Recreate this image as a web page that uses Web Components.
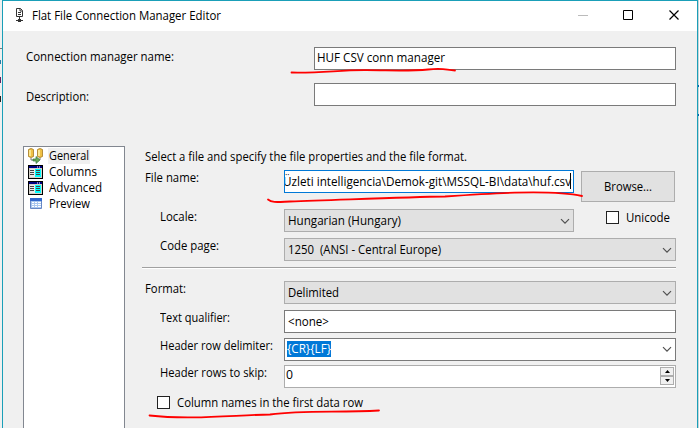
<!DOCTYPE html>
<html lang="en"><head><meta charset="utf-8"><title>Flat File Connection Manager Editor</title>
<style>html,body{margin:0;height:100%;overflow:hidden}body{background:#f0f0f0;color:#000;font:12px/16px "Open Sans","Noto Sans",sans-serif}</style></head>
<body><file-editor></file-editor>
<script>
function define(name, html, init) {
  const t = document.createElement('template');
  t.innerHTML = html;
  customElements.define(name, class extends HTMLElement {
    connectedCallback() {
      if (this.shadowRoot) return;
      this.attachShadow({ mode: 'open' }).append(t.content.cloneNode(true));
      if (init) init(this, this.shadowRoot);
    }
  });
}

/* Text line condensed to the advance width given by "w". */
define('ui-text', `<style>:host{display:inline-block;white-space:pre;height:16px;flex:none}
span{display:inline-block;transform-origin:0 50%}</style><span><slot></slot></span>`, (el, root) => {
  const w = +el.getAttribute('w'), s = root.querySelector('span');
  el.style.width = w + 'px';
  const n = s.getBoundingClientRect().width;
  if (n) s.style.transform = `scaleX(${w / n})`;
});

define('ui-field', `<style>:host{display:flex;box-sizing:border-box;height:23px;border:1px solid #7a7a7a;background:#fff;padding:2px 3px 0;flex:1;min-width:0;overflow:hidden}
:host([grey]){background:#e1e1e1;border-color:#adadad;padding-top:3px}:host([focused]){border-color:#0078d7;padding-top:3px}:host([low]){padding-top:3px}
svg{display:none;margin:5px 0 0 auto;flex:none}:host([combo]) svg{display:block}</style><slot></slot>
<svg width="10" height="7" viewBox="0 0 10 7"><path d="M1 1.200l4 4 4-4" fill="none" stroke="#505050" stroke-width="1.2"/></svg>`);

define('ui-check', `<style>:host{display:flex;gap:7px;align-items:flex-start}i{box-sizing:border-box;width:13px;height:13px;border:1px solid #222;background:#fff}
::slotted(*){margin-top:-1px}</style><i></i><slot></slot>`);

define('ui-button', `<style>:host{box-sizing:border-box;display:flex;justify-content:center;align-items:center;width:94px;height:31px;padding-top:1px;border:1px solid #adadad;background:#e1e1e1}</style><slot></slot>`);

define('ui-spin', `<style>:host{display:flex;flex-direction:column;width:14px;margin:-1px -2px 0 auto}
i{box-sizing:border-box;display:flex;justify-content:center;align-items:center;height:9px;border:1px solid #adadad;background:#f0f0f0}svg{display:block}</style>
<i><svg width="5" height="3"><path d="M0 3L2.5 0 5 3z"/></svg></i><i><svg width="5" height="3"><path d="M0 0h5L2.5 3z"/></svg></i>`);

define('ui-row', `<style>:host{display:flex;height:23px;align-items:flex-start}
.l{flex:none;width:var(--label,139px);box-sizing:border-box;padding-left:var(--indent,0);padding-top:var(--drop,0)}</style>
<div class="l"><slot name="label"></slot></div><slot></slot>`);

define('title-bar', `<style>:host{display:flex;height:30px;background:#fff;align-items:flex-start}
.doc{margin:7px 0 0 12px}.txt{margin:7px 0 0 8px}.ctl{margin:8px 17px 0 auto;flex:none}</style>
<svg class="doc" width="9" height="15" viewBox="0 0 9 15" fill="none" stroke="#333"><path d="M1.500.5h4l2 2v6h-6zM5 .5v2.500h2.500M3 4.500h3M3 6.500h3M4.500 9v4"/><path d="M1 12.500h7"/><path d="M3 12.500h3" stroke-width="3"/></svg>
<div class="txt"><slot></slot></div>
<svg class="ctl" width="102" height="12" viewBox="0 0 102 12" fill="none"><path d="M0 6.500h10" stroke="#bbb"/><path d="M45.500 1.500h9v9h-9z" stroke="#000"/><path d="M91.500 1.500l9 9m0-9l-9 9" stroke="#000" stroke-width="1.200"/></svg>`);

define('nav-item', `<style>:host{display:flex;height:16px;padding-left:4px;gap:4px;align-items:center}.t{padding:0 1px;height:16px;line-height:16px}:host([active]) .t{background:#f0f0f0}
svg{flex:none}</style><svg width="16" height="16" viewBox="0 0 16 16"></svg><div class="t"><slot></slot></div>`, (el, root) => {
  root.querySelector('svg').innerHTML = {
    general: '<path fill="#efc044" stroke="#a57922" stroke-width=".8" d="M.5 1.500q2.500-2 5 0v7q-2.500 2-5 0zM9.500 1.500q2.500-2 5 0v7q-2.500 2-5 0z"/><path stroke="#fff2a5" stroke-width="1.500" d="M2 2v6M11 2v6"/><path fill="none" stroke="#777" d="M3 10v2h3m6-2v2"/><path fill="#69a957" stroke="#35753b" stroke-width=".7" d="M5 11h3V8.500l4 3.500-4 3.500V13H5z"/>',
    table: '<path fill="#000" d="M0 1h15v14H0z"/><path fill="#d4d0c8" d="M1 2h13v12H1z"/><path fill="#000080" d="M1 2h13v2H1z"/><path fill="#fff" d="M9 2.500h1v1H9zM11 2.500h1v1h-1z"/><path fill="#e8e8e8" d="M2 5h5v8H2z"/><path fill="#0ff" d="M7 5h6v8H7z"/><path stroke="#444" d="M2 6.500h4M2 8.500h4M2 10.500h4M8 6.500h4M8 8.500h4M8 10.500h4"/>',
    preview: '<path fill="#a9c7ef" stroke="#6687c4" d="M2.500 3.500h11v9h-11z"/><path fill="#3167cc" d="M2 2h12v3H2z"/><path stroke="#fff" d="M4 6.500h2m1 0h2m1 0h3M4 8.500h2m1 0h2m1 0h3M4 10.500h2m1 0h2m1 0h3"/>'
  }[el.getAttribute('icon')];
});

define('file-editor', `<style>
:host{display:block;position:relative;width:699px;height:428px;overflow:hidden}
.win{box-sizing:border-box;height:428px;margin:0 1px 0 2px;border:1px solid #1a9fb8;border-bottom:0;background:#f0f0f0;overflow:hidden}
.top{padding:16px 21px 0 23px;display:grid;gap:13px;--label:288px;--drop:2px}
.main{display:flex;padding:40px 21px 0 20px}
nav{box-sizing:border-box;width:102px;height:283px;border:1px solid #828790;background:#fff;padding-top:1px}
.form{flex:1;margin-left:20px;min-width:0;display:flex;flex-direction:column;padding-top:3px}
.in{--indent:15px}
hr{width:534px;height:1px;border:0;border-bottom:1px solid #fff;background:#a0a0a0;margin:6px 0 12px -3px}
.ink,.edge{position:absolute;left:0;top:0;pointer-events:none}
</style>
<div class="win">
<title-bar><ui-text w="189">Flat File Connection Manager Editor</ui-text></title-bar>
<div class="top">
<ui-row><ui-text slot="label" w="148">Connection manager name:</ui-text><ui-field><ui-text w="128" style="margin-left:-1px">HUF CSV conn manager</ui-text></ui-field></ui-row>
<ui-row style="--drop:6px"><ui-text slot="label" w="63">Description:</ui-text><ui-field></ui-field></ui-row>
</div>
<div class="main">
<nav>
<nav-item icon="general" active><ui-text w="40">General</ui-text></nav-item>
<nav-item icon="table"><ui-text w="48">Columns</ui-text></nav-item>
<nav-item icon="table"><ui-text w="53">Advanced</ui-text></nav-item>
<nav-item icon="preview"><ui-text w="41">Preview</ui-text></nav-item>
</nav>
<div class="form">
<ui-text w="322" style="margin-bottom:5px">Select a file and specify the file properties and the file format.</ui-text>
<ui-row><ui-text slot="label" w="54">File name:</ui-text><ui-field focused style="flex:0 0 290px;justify-content:flex-end;padding-right:0"><ui-text w="288">Üzleti intelligencia\\Demok-git\\MSSQL-BI\\data\\huf.csv</ui-text><i style="width:1px;height:16px;background:#000;margin:-1px 2px 0 -1px;flex:none"></i></ui-field><ui-button style="margin:1px 0 0 7px"><ui-text w="48">Browse...</ui-text></ui-button></ui-row>
<ui-row class="in" style="margin-top:16px"><ui-text slot="label" w="37">Locale:</ui-text><ui-field grey combo style="flex:0 0 290px"><ui-text w="113">Hungarian (Hungary)</ui-text></ui-field><ui-check style="margin:2px 0 0 32px"><ui-text w="44">Unicode</ui-text></ui-check></ui-row>
<ui-row class="in" style="margin-top:6px"><ui-text slot="label" w="59">Code page:</ui-text><ui-field grey combo><ui-text w="153">1250  (ANSI - Central Europe)</ui-text></ui-field></ui-row>
<hr>
<ui-row><ui-text slot="label" w="41">Format:</ui-text><ui-field grey combo><ui-text w="51">Delimited</ui-text></ui-field></ui-row>
<ui-row class="in" style="margin-top:6px"><ui-text slot="label" w="70">Text qualifier:</ui-text><ui-field low><ui-text w="41">&lt;none&gt;</ui-text></ui-field></ui-row>
<ui-row class="in" style="margin-top:5px"><ui-text slot="label" w="113">Header row delimiter:</ui-text><ui-field combo><ui-text w="44" style="background:#0078d7;color:#fff;margin-left:-1px">{CR}{LF}</ui-text></ui-field></ui-row>
<ui-row class="in" style="margin-top:4px"><ui-text slot="label" w="107">Header rows to skip:</ui-text><ui-field style="border-color:#adadad"><ui-text w="7" style="margin:-1px 0 0 -2px">0</ui-text><ui-spin></ui-spin></ui-field></ui-row>
<ui-check style="margin:8px 0 0 12px"><ui-text w="186">Column names in the first data row</ui-text></ui-check>
</div></div></div>
<svg class="edge" width="699" height="428"><path fill="#c8d4d8" d="M698 0h1v428h-1z"/><path fill="#0a64ad" d="M698 85h1v2h-1zM698 114h1v2h-1z"/><path fill="#777" d="M0 48h2v1H0z"/><path fill="#267aa6" d="M0 60h1v4H0z"/><path fill="#602060" d="M0 77h1v6H0z"/><path fill="#222" d="M0 96h1v6H0z"/></svg>
<svg class="ink" width="699" height="428" fill="none" stroke="#f00" stroke-width="1.8" stroke-linecap="round"><path d="M291.500 72.500C325 73 338 70 366 70.200S410 71.500 428 69.500S446 70.500 455 70.500"/><path d="M268 199.500C272 203 278 202 290 201.500C340 200 405 197 445 196.500C480 194 550 189 582 196"/><path d="M149.500 415.500C190 420 235 415 270 414.500C305 410 340 413 379 410.500"/></svg>`);
</script></body></html>
